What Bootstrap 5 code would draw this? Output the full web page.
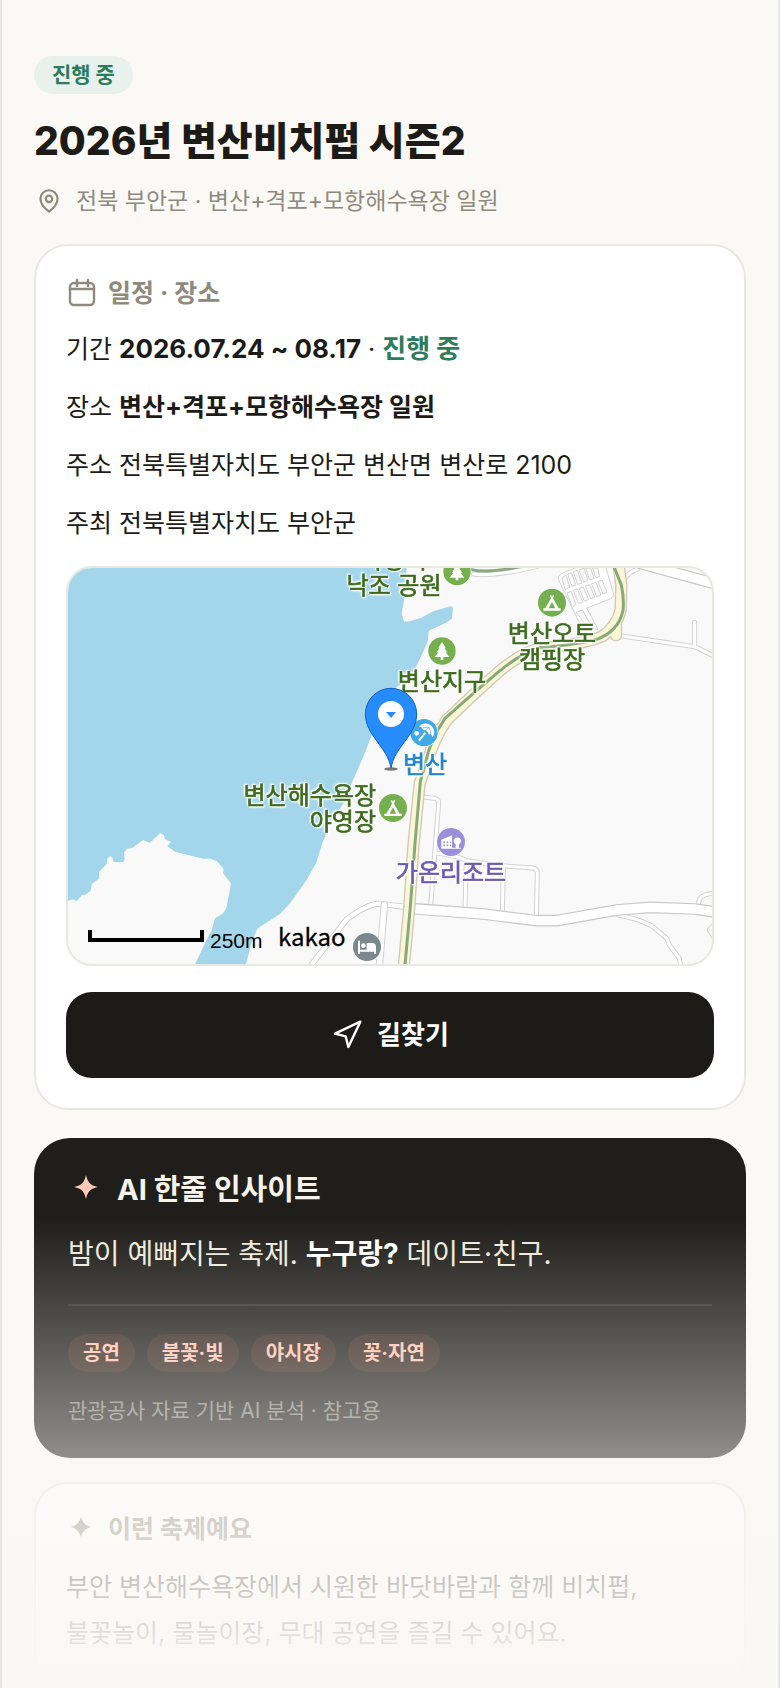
<!DOCTYPE html>
<html lang="ko">
<head>
<meta charset="utf-8">
<meta name="viewport" content="width=device-width, initial-scale=1">
<title>2026년 변산비치펍 시즌2</title>
<link rel="stylesheet" href="https://cdn.jsdelivr.net/npm/bootstrap@5.3.0/dist/css/bootstrap.min.css">
<style>
  :root { --paper: #faf9f5; --ink: #1d1b17; --muted: #8f8a7e; --line: #e9e7e1; --green: #2d7d5d; }
  body { background: var(--paper); color: var(--ink); font-family: Inter, "Noto Sans CJK KR", sans-serif; font-size: 25px; line-height: 42px; }
  .festival { border: solid var(--line); border-width: 0 2px; padding: 56px 32px 0; min-height: 100vh; }
  .status-pill { background: #e8f1ec; color: var(--green); font-size: 21px; font-weight: 700; line-height: 38px; padding: 0 18px; }
  .festival-title { font-size: 39px; font-weight: 800; line-height: 50px; margin: 22px 0 18px; }
  .place { color: var(--muted); font-size: 23px; line-height: 34px; gap: 12px; margin-bottom: 26px; }
  .panel { border: 2px solid var(--line); border-radius: 34px; padding: 30px; background: #fff; }
  .panel-title { color: var(--muted); font-size: 25px; font-weight: 700; line-height: 34px; gap: 12px; margin: 0; }
  .facts { gap: 16px; margin: 18px 0 22px; }
  .facts strong, .insight-text strong { font-weight: 700; }
  .period strong { font-size: 26px; }
  .ongoing { color: var(--green); }
  .map-frame { border: 2px solid var(--line); border-radius: 26px; overflow: hidden; background: #f9f9f9; }
  .map-frame svg { width: 100%; height: auto; }
  .label { font-family: "Noto Sans CJK KR", sans-serif; font-size: 24px; stroke-width: .7; filter: drop-shadow(1px 1px 0 #fff) drop-shadow(-1px -1px 0 #fff) drop-shadow(0 0 1px #fff); }
  .park { fill: #3d6c1e; stroke: #3d6c1e; } .beach { fill: #2287cc; stroke: #2287cc; } .stay { fill: #6c5cb4; stroke: #6c5cb4; }
  .route-btn, .route-btn:hover { background: var(--ink); color: #fff; border: 0; border-radius: 26px; font-size: 26px; font-weight: 700; line-height: 38px; padding: 24px; gap: 14px; margin-top: 26px; }
  .insight { background: #1f1e1a; border-radius: 36px; padding: 34px 34px 32px; margin: 28px 0 24px; }
  .insight-title { color: #f5f2ea; font-size: 29px; font-weight: 700; line-height: 36px; gap: 13px; margin: 0; }
  .insight-text { color: #eeeade; font-size: 28px; line-height: 46px; margin: 23px 0 27px; }
  .insight-text strong { color: #fff; }
  .tags { border-top: 2px solid #33322e; padding-top: 28px; gap: 12px; }
  .tag { background: rgba(255, 110, 80, .11); color: #ffc3ae; font-size: 20px; font-weight: 700; line-height: 38px; padding: 0 15px; }
  .source { color: #86847b; font-size: 21px; line-height: 30px; margin: 24px 0 0; }
  .about .panel-title { line-height: 30px; }
  .about-text { line-height: 46px; margin: 20px 0 0; max-width: 600px; }
  .fade-out { height: 470px; background: linear-gradient(rgba(250, 248, 244, 0), #faf8f4); pointer-events: none; }
</style>
</head>
<body>
<main class="festival position-relative overflow-hidden">
  <header>
    <div class="d-flex"><span class="status-pill rounded-pill">진행 중</span></div>
    <h1 class="festival-title">2026년 변산비치펍 시즌2</h1>
    <p class="place d-flex align-items-center">
      <svg width="30" height="26" viewBox="-2 0 28 24" fill="none" stroke="currentColor" stroke-width="2" aria-hidden="true"><path d="M20 10c0 5-4 9-8 12-4-3-8-7-8-12a8 8 0 0 1 16 0Z"/><circle cx="12" cy="10" r="3"/></svg>
      <span>전북 부안군 · 변산+격포+모항해수욕장 일원</span>
    </p>
  </header>

  <section class="panel">
    <h2 class="panel-title d-flex align-items-center">
      <svg width="30" height="30" viewBox="0 0 30 30" fill="none" stroke="currentColor" stroke-width="2.400" stroke-linecap="round" aria-hidden="true"><rect x="4" y="5" width="24" height="22" rx="4"/><path d="M4 11h24M11 2v6M22 2v6"/></svg>
      <span>일정 · 장소</span>
    </h2>
    <div class="facts d-flex flex-column">
      <div class="period">기간 <strong>2026.07.24 ~ 08.17</strong> · <strong class="ongoing">진행 중</strong></div>
      <div>장소 <strong>변산+격포+모항해수욕장 일원</strong></div>
      <div>주소 전북특별자치도 부안군 변산면 변산로 2100</div>
      <div>주최 전북특별자치도 부안군</div>
    </div>
    <div class="map-frame">
      <svg class="d-block" viewBox="0 0 644 396" role="img" aria-label="변산해수욕장 지도">
        <defs>
          <g id="tree"><circle r="43" fill="#fff"/><circle r="41" fill="#75b04f"/><path fill="#fff" d="M0-27 11-10H7L16 4H11L22 18H4V26H-4V18H-22L-11 4H-16L-7-10H-11Z"/></g>
          <g id="tent"><circle r="44" fill="#fff"/><circle r="42" fill="#75b04f"/><path fill="#fff" d="M-7-22-3-24 0-18 3-24 7-22 3-13 20 17H26V24H-26V17H-20L-3-13Z"/><path fill="#75b04f" d="M0-2 10 17H-10Z"/></g>
        </defs>
        <g transform="translate(-18 -18) scale(.333333)">
          <path fill="#a3d6eb" d="M54 54H1070L1063 145 1055 190 1062 215 1078 214 1112 204 1150 184 1203 168 1209 174 1206 206 1188 218 1136 243 1133 277 1103 340 1085 385 1040 410 1000 480 968 550 940 620 905 700 880 760 868 780 850 790 829 850 817 880 800 935 770 990 720 1060 690 1092 623 1135 605 1175 588 1243H435L465 1180 485 1140 495 1105 520 1090 530 1070 543 1000 519 970 521 957 501 934 482 926 460 926 375 905 352 888 363 875 345 868 342 855 330 850 300 878 279 870 247 894 232 896 222 908 224 928 220 937 191 936 187 922 180 918 172 926 170 943 147 966 148 985 125 1003 122 1022 105 1035 97 1034 80 1053 68 1048 54 1052Z"/>
          <g transform="translate(900 0)" fill="none" stroke-linejoin="round" stroke-linecap="round">
            <!-- side streets: grey casing under a white surface -->
            <path stroke="#d2d2d2" stroke-width="15" d="M222 742 255 745Q267 748 266 760L255 900 242 1065M257 908 320 920 350 932 440 946 548 954Q563 957 562 970L559 1100M349 935 345 1075M460 948 457 1088M805 1095 860 1108 905 1127 950 1165 958 1185 988 1225 993 1250M1042 1070 1050 1045Q1060 1031 1095 1030M1096 1120 1078 1140 1096 1170M815 258 1035 290 1095 320M1034 290V217M370 72Q420 82 560 50M822 90Q835 66 862 58"/>
            <path stroke="#fff" stroke-width="9" d="M222 742 255 745Q267 748 266 760L255 900 242 1065M257 908 320 920 350 932 440 946 548 954Q563 957 562 970L559 1100M349 935 345 1075M460 948 457 1088M805 1095 860 1108 905 1127 950 1165 958 1185 988 1225 993 1250M1042 1070 1050 1045Q1060 1031 1095 1030M1096 1120 1078 1140 1096 1170M815 258 1035 290 1095 320M1034 290V217M370 72Q420 82 560 50M822 90Q835 66 862 58"/>
            <!-- car park -->
            <g stroke="#d2d2d2" stroke-width="3">
              <path fill="#fff" d="M628 95Q618 76 640 68L700 44H765L791 132Q790 144 775 149L710 174 745 240 690 220Z"/>
              <path fill="#f9f9f9" d="M640 98 636 84 648 75 660 112 646 118ZM654 72 664 68 678 105 667 109ZM671 65 682 61 696 99 684 103ZM688 60 702 54 714 91 702 96ZM708 54H722L732 85 720 89ZM729 54H743L749 79 738 83ZM652 128 664 124 678 163 668 172ZM671 121 682 117 698 156 686 160ZM689 115 700 111 716 149 704 153ZM707 108 719 104 734 142 723 146ZM726 101 738 97 753 135 741 139ZM745 94 756 90 771 127 760 131ZM680 186 698 180 720 222 704 220Z"/>
            </g>
            <path stroke="#cacaca" stroke-width="18" d="M170 1071 85 1061Q50 1063 -10 1108L-120 1250"/>
            <path stroke="#fff" stroke-width="13" d="M170 1071 85 1061Q50 1063 -10 1108L-120 1250"/>
            <path stroke="#cacaca" stroke-width="22" d="M103 1065 88 1250"/>
            <path stroke="#fff" stroke-width="17" d="M103 1064 88 1250"/>
            <path stroke="#c8c8c8" stroke-width="35" d="M190 1076 400 1092 560 1112 620 1112 800 1080 900 1072 1035 1077 1110 1088M870 40 1110 105"/>
            <path stroke="#fff" stroke-width="28" d="M180 1076 400 1092 560 1112 620 1112 800 1080 900 1072 1035 1077 1110 1088M870 40 1110 105"/>
            <!-- coast road -->
            <path stroke="#d0c9b8" stroke-width="37" d="M798 225V256M805 40 814 105 812 180Q800 230 757 259 700 283 570 295 520 305 450 362L370 434 290 510Q250 570 232 635L209 700 190 890 178 1070 161 1255"/>
            <path stroke="#fbf6d5" stroke-width="29" d="M798 225V256M805 40 814 105 812 180Q800 230 757 259 700 283 570 295 520 305 450 362L370 434 290 510Q250 570 232 635L209 700 190 890 178 1070 161 1255"/>
            <path stroke="#87a97b" stroke-width="9" stroke-linecap="butt" d="M788 40 814 105Q823 145 819 182 805 245 740 268 690 283 570 293 520 305 450 362L370 430 285 505Q240 570 226 640L211 695 195 880 181 1070 164 1255M360 58Q410 72 520 48"/>
          </g>
          <g transform="translate(900 0)">
            <use href="#tree" x="321" y="65"/><use href="#tent" x="606" y="158"/><use href="#tree" x="276" y="303"/><use href="#tent" x="129" y="774"/>
            <g transform="translate(222 548)"><circle r="43" fill="#fff"/><circle r="41" fill="#40a8e6"/><circle cx="-22" cy="2" r="7" fill="#fff"/><g transform="rotate(38)"><path fill="#fff" d="M-26 0A26 25 0 0 1 26 0Q18-6 11 0 0-7-11 0-18-6-26 0Z" transform="translate(3 -5)"/><path stroke="#fff" stroke-width="6" d="M3-2V28"/></g><path stroke="#40a8e6" stroke-width="2" fill="none" d="M-3-14Q12-18 15-16L2-4M15-16Q22-2 19 9"/></g>
            <g transform="translate(303 876)"><circle r="44" fill="#fff"/><circle r="42" fill="#9c8fd9"/><path fill="#fff" d="M-29 17V-7L3-20V17H14V7A11 11 0 1 1 24 7V17H29V20H-29Z"/><path stroke="#9c8fd9" stroke-width="5" stroke-dasharray="5 5" d="M-23 1H0M-23 10H0"/></g>
            <g transform="translate(51 1191)"><circle r="44" fill="#fff"/><circle r="42" fill="#7a898e"/><path fill="#fff" d="M-27-19H-21V8H-1V-12H18Q27-10 27 0V20H21V14H-21V20H-27Z"/><circle cx="-11" cy="-4" r="7" fill="#fff"/></g>
          </g>
          <path fill="none" stroke="#000" stroke-width="12" d="M120 1140V1170H456V1140"/>
        </g>
        <g class="label park">
          <text x="326" y="0" text-anchor="middle">사랑의</text>
          <text x="326" y="26" text-anchor="middle">낙조 공원</text>
          <text x="484" y="74" text-anchor="middle">변산오토</text>
          <text x="484" y="100" text-anchor="middle">캠핑장</text>
          <text x="374" y="122" text-anchor="middle">변산지구</text>
          <text x="308" y="236" text-anchor="end">변산해수욕장</text>
          <text x="308" y="262" text-anchor="end">야영장</text>
        </g>
        <text class="label beach" x="357" y="205" text-anchor="middle">변산</text>
        <text class="label stay" x="383" y="313" text-anchor="middle">가온리조트</text>
        <text x="142" y="380" font-family="Liberation Sans, sans-serif" font-size="21">250m</text>
        <text x="210" y="378" font-family="Noto Sans CJK KR, sans-serif" font-size="24" stroke="#000" stroke-width=".3">kakao</text>
        <g transform="translate(282 -18) scale(.333333)">
          <ellipse cx="123" cy="657" rx="20" ry="5" fill="#777"/>
          <path fill="#268cfc" stroke="#125fc4" stroke-width="3" d="M123 654C112 590 46 556 46 492A77 77 0 0 1 200 492C200 556 134 590 123 654Z"/>
          <circle cx="123" cy="492" r="39" fill="#fff"/><path fill="#268cfc" d="M108 486H138L123 504Z"/>
        </g>
      </svg>
    </div>
    <button type="button" class="btn route-btn w-100 d-flex justify-content-center align-items-center">
      <svg width="32" height="32" viewBox="0 0 24 24" fill="none" stroke="currentColor" stroke-width="1.800" stroke-linejoin="round" aria-hidden="true"><path d="m3 11 19-9-9 19-2-8Z"/></svg>
      <span>길찾기</span>
    </button>
  </section>

  <section class="insight">
    <h2 class="insight-title d-flex align-items-center">
      <svg width="36" height="36" viewBox="-18 -15 36 36" fill="#ffc9b8" aria-hidden="true"><path d="M0-12C2-4 4-2 12 0 4 2 2 4 0 12-2 4-4 2-12 0-4-2-2-4 0-12Z"/></svg>
      <span>AI 한줄 인사이트</span>
    </h2>
    <p class="insight-text">밤이 예뻐지는 축제. <strong>누구랑?</strong> 데이트·친구.</p>
    <div class="tags d-flex flex-wrap">
      <span class="tag rounded-pill">공연</span>
      <span class="tag rounded-pill">불꽃·빛</span>
      <span class="tag rounded-pill">야시장</span>
      <span class="tag rounded-pill">꽃·자연</span>
    </div>
    <p class="source">관광공사 자료 기반 AI 분석 · 참고용</p>
  </section>

  <section class="panel about">
    <h2 class="panel-title d-flex align-items-center">
      <svg width="30" height="30" viewBox="-15 -13 30 30" fill="currentColor" aria-hidden="true"><path d="M0-10C2-4 4-2 10 0 4 2 2 4 0 10-2 4-4 2-10 0-4-2-2-4 0-10Z"/></svg>
      <span>이런 축제예요</span>
    </h2>
    <p class="about-text">부안 변산해수욕장에서 시원한 바닷바람과 함께 비치펍, 불꽃놀이, 물놀이장, 무대 공연을 즐길 수 있어요.</p>
  </section>

  <div class="fade-out position-absolute start-0 end-0 bottom-0"></div>
</main>
<script src="https://cdn.jsdelivr.net/npm/bootstrap@5.3.0/dist/js/bootstrap.bundle.min.js"></script>
</body>
</html>
